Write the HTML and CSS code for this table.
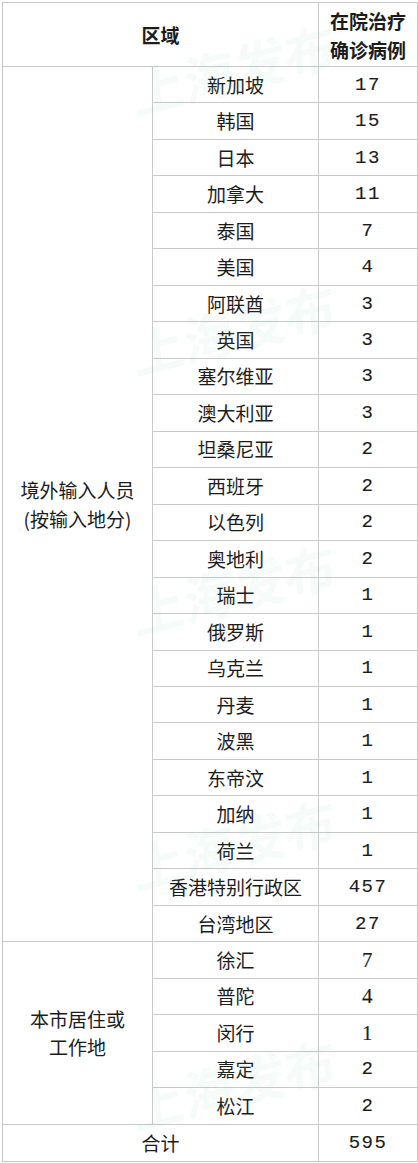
FILE: index.html
```html
<!DOCTYPE html>
<html lang="zh">
<head>
<meta charset="utf-8">
<title>在院治疗确诊病例</title>
<link rel="stylesheet" href="styles.css">
</head>
<body>
<div class="wrap">
<table class="cases">
  <colgroup><col class="c1"><col class="c2"><col class="c3"></colgroup>
  <thead>
    <tr class="head"><th colspan="2">区域</th><th>在院治疗<br>确诊病例</th></tr>
  </thead>
  <tbody>
    <tr><td rowspan="24" class="group">境外输入人员<br>(按输入地分)</td><td>新加坡</td><td class="num">17</td></tr>
    <tr><td>韩国</td><td class="num">15</td></tr>
    <tr><td>日本</td><td class="num">13</td></tr>
    <tr><td>加拿大</td><td class="num">11</td></tr>
    <tr><td>泰国</td><td class="num">7</td></tr>
    <tr><td>美国</td><td class="num">4</td></tr>
    <tr><td>阿联酋</td><td class="num">3</td></tr>
    <tr><td>英国</td><td class="num">3</td></tr>
    <tr><td>塞尔维亚</td><td class="num">3</td></tr>
    <tr><td>澳大利亚</td><td class="num">3</td></tr>
    <tr><td>坦桑尼亚</td><td class="num">2</td></tr>
    <tr><td>西班牙</td><td class="num">2</td></tr>
    <tr><td>以色列</td><td class="num">2</td></tr>
    <tr><td>奥地利</td><td class="num">2</td></tr>
    <tr><td>瑞士</td><td class="num">1</td></tr>
    <tr><td>俄罗斯</td><td class="num">1</td></tr>
    <tr><td>乌克兰</td><td class="num">1</td></tr>
    <tr><td>丹麦</td><td class="num">1</td></tr>
    <tr><td>波黑</td><td class="num">1</td></tr>
    <tr><td>东帝汶</td><td class="num">1</td></tr>
    <tr><td>加纳</td><td class="num">1</td></tr>
    <tr><td>荷兰</td><td class="num">1</td></tr>
    <tr><td>香港特别行政区</td><td class="num">457</td></tr>
    <tr><td>台湾地区</td><td class="num">27</td></tr>
    <tr><td rowspan="5" class="group local">本市居住或<br>工作地</td><td>徐汇</td><td class="num serif">7</td></tr>
    <tr><td>普陀</td><td class="num serif">4</td></tr>
    <tr><td>闵行</td><td class="num serif">1</td></tr>
    <tr><td>嘉定</td><td class="num">2</td></tr>
    <tr><td>松江</td><td class="num">2</td></tr>
    <tr class="total"><td colspan="2">合计</td><td class="num">595</td></tr>
  </tbody>
</table>
<div class="wm wm1">上海发布</div>
<div class="wm wm2">上海发布</div>
<div class="wm wm3">上海发布</div>
<div class="wm wm4">上海发布</div>
<div class="wm wm5">上海发布</div>
</div>
</body>
</html>
```
FILE: styles.css
```css
html, body {
  margin: 0;
  padding: 0;
  background: #ffffff;
}
body {
  font-family: "Noto Sans CJK SC", "Noto Sans", sans-serif;
  color: #1c1c1c;
}
.wrap {
  position: relative;
  width: 418px;
  height: 1163px;
  overflow: hidden;
  padding: 2px 0 0 2px;
  box-sizing: border-box;
}
.cases {
  border-collapse: collapse;
  table-layout: fixed;
  width: 415px;
  font-size: 19px;
}
.c1 { width: 150px; }
.c2 { width: 166px; }
.c3 { width: 99px; }
.cases th, .cases td {
  border: 1px solid #c9c9c9;
  padding: 0;
  text-align: center;
  vertical-align: middle;
  line-height: 24px;
}
.head th {
  height: 63px;
  font-weight: 700;
  line-height: 29px;
}
.cases tbody tr {
  height: 36.48px;
}
.group {
  line-height: 29px !important;
}
.local {
  line-height: 28px !important;
}
.num {
  font-family: "Liberation Mono", "DejaVu Sans Mono", monospace;
  font-size: 19px;
  letter-spacing: 1.5px;
  -webkit-text-stroke: 0.15px #1c1c1c;
}
.serif {
  font-family: "Liberation Serif", serif;
  font-size: 21px;
}
.total td {
  height: 36px;
}
.wm {
  position: absolute;
  left: 130px;
  font-family: "Noto Sans CJK SC", sans-serif;
  font-size: 52px;
  font-weight: 700;
  color: rgba(110, 200, 150, 0.07);
  transform: rotate(-14deg) skewX(-8deg);
  white-space: nowrap;
  pointer-events: none;
}
.wm1 { top: 30px; }
.wm2 { top: 290px; }
.wm3 { top: 550px; }
.wm4 { top: 805px; }
.wm5 { top: 1045px; }
```
